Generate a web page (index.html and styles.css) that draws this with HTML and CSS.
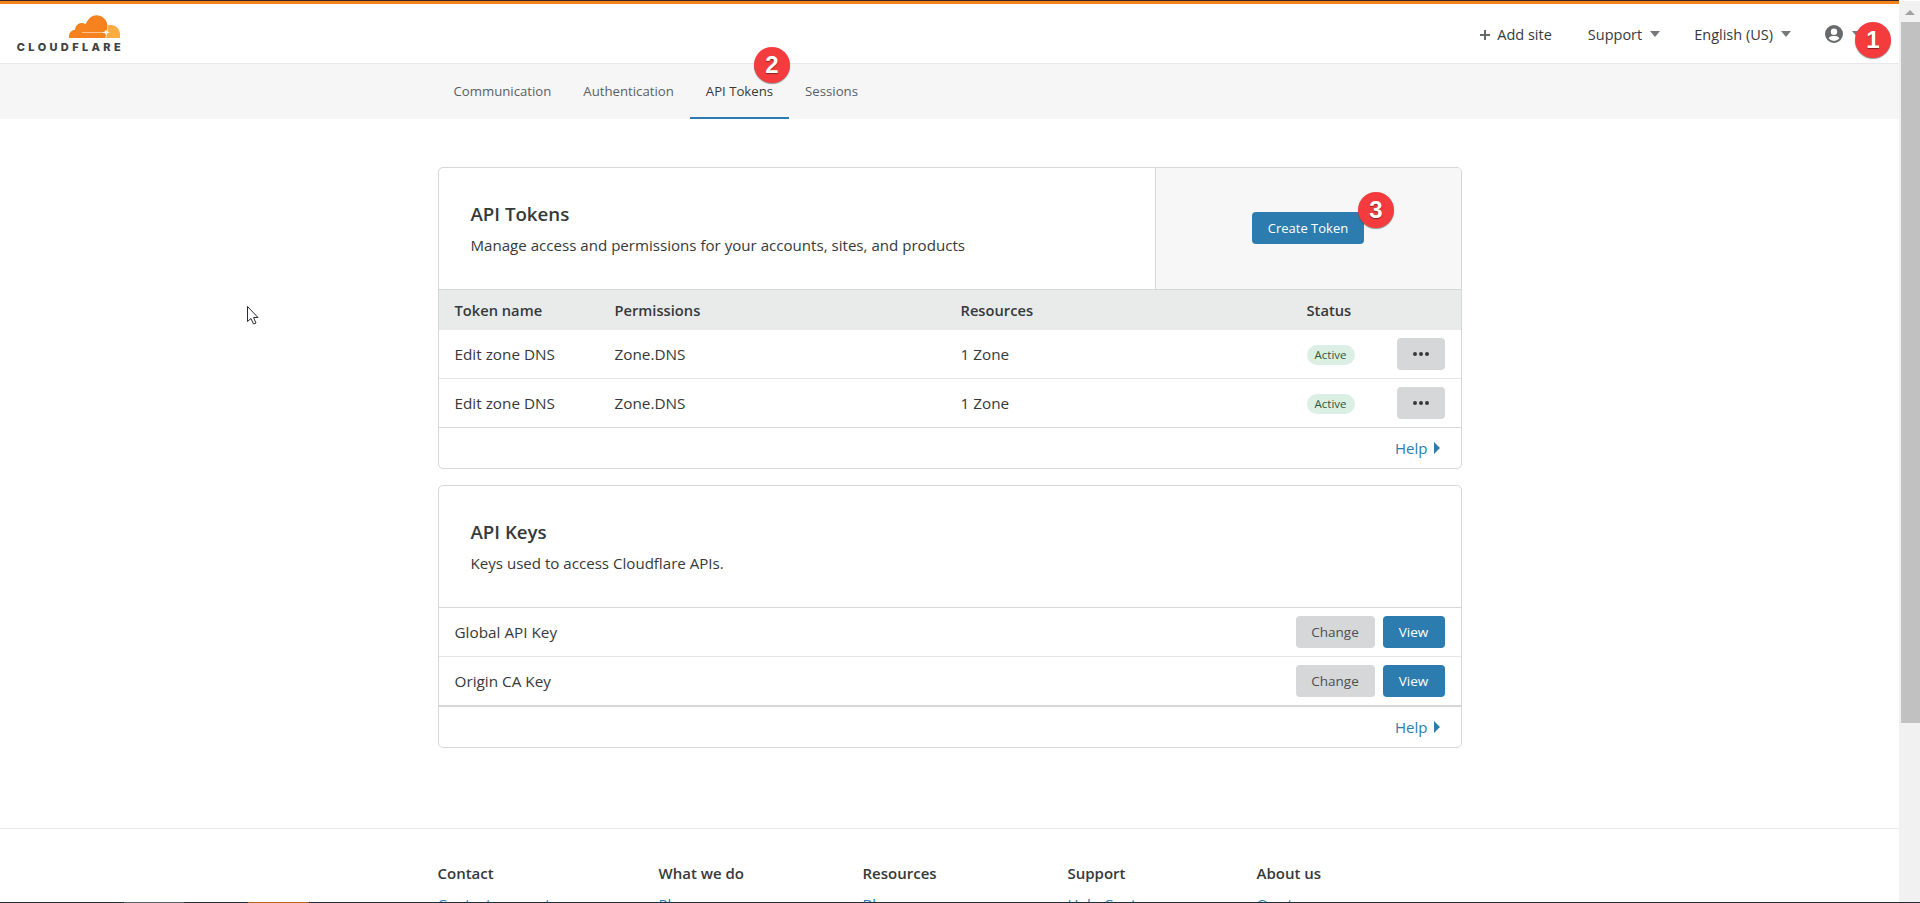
FILE: index.html
```html
<!DOCTYPE html>
<html lang="en">
<head>
<meta charset="utf-8">
<title>API Tokens | Cloudflare</title>
<link rel="stylesheet" href="styles.css">
</head>
<body>
<div class="viewport">
  <div class="page">
    <div class="topline"></div>
    <header class="header">
      <a class="logo">
        <svg class="cloud" width="52" height="24" viewBox="0 0 52 24">
          <path fill="#f6821f" d="M0 23v-2.500C0.500 17 3 15 6 15c0.300-4 3-7 6.500-7 1.500 0 2.800 0.500 4 1.300C19.500 3.500 23 0.300 27.500 0.300c5.500 0 9.800 4 10.800 9.200 0.300 1.500 0.200 3 0 4.500-0.500 3-1 6-2 9z"/>
          <path fill="#fbad41" d="M37 23c0.800-2.500 1.400-5.500 1.700-8.500 0.300-1.500 0.300-3 0.100-4.300 1-0.300 2-0.300 3-0.300 5 0 9.200 4 9.200 9v4.100z"/>
          <path fill="#fff" d="M13 17.200h20.500l2.500-0.600 1 -2.200 1 2.200 3 0.900-3 0.800-1 2.300-1-2.300-2.500-0.600h-20.500z"/>
        </svg>
        <span class="wordmark">CLOUDFLARE</span>
      </a>
      <nav class="header-actions">
        <span class="action add"><svg class="plus" width="12" height="12" viewBox="0 0 12 12"><path d="M5 1h2v4h4v2H7v4H5V7H1V5h4z"/></svg>Add site</span>
        <span class="action support">Support<i class="caret"></i></span>
        <span class="action lang">English (US)<i class="caret"></i></span>
        <span class="action user">
          <svg width="18" height="18" viewBox="0 0 18 18"><path fill="#666a6d" fill-rule="evenodd" d="M9 0a9 9 0 1 0 0 18A9 9 0 0 0 9 0zm0 3.500a3.200 3.200 0 1 1 0 6.400 3.200 3.200 0 0 1 0-6.400zM9 16a7 7 0 0 1-5.300-2.500c.5-1.600 2-2.500 3.300-2.500h4c1.300 0 2.800.9 3.300 2.500A7 7 0 0 1 9 16z"/></svg>
          <i class="caret"></i>
        </span>
      </nav>
    </header>
    <div class="subnav">
      <div class="container tabs">
        <a class="tab">Communication</a>
        <a class="tab">Authentication</a>
        <a class="tab active">API Tokens</a>
        <a class="tab">Sessions</a>
      </div>
    </div>
    <main class="container main">
      <section class="card">
        <div class="card-head">
          <div class="card-intro">
            <h2>API Tokens</h2>
            <p>Manage access and permissions for your accounts, sites, and products</p>
          </div>
          <div class="card-side"><button class="btn primary create">Create Token</button></div>
        </div>
        <div class="row thead"><span>Token name</span><span>Permissions</span><span>Resources</span><span>Status</span></div>
        <div class="row">
          <span>Edit zone DNS</span><span>Zone.DNS</span><span>1 Zone</span><span><b class="pill">Active</b></span>
          <button class="btn neutral more"><i></i><i></i><i></i></button>
        </div>
        <div class="row last">
          <span>Edit zone DNS</span><span>Zone.DNS</span><span>1 Zone</span><span><b class="pill">Active</b></span>
          <button class="btn neutral more"><i></i><i></i><i></i></button>
        </div>
        <div class="card-foot"><a class="help">Help<i class="arrow"></i></a></div>
      </section>
      <section class="card">
        <div class="card-intro keys">
          <h2>API Keys</h2>
          <p>Keys used to access Cloudflare APIs.</p>
        </div>
        <div class="keyrow"><span>Global API Key</span><div class="btns"><button class="btn neutral change">Change</button><button class="btn primary view">View</button></div></div>
        <div class="keyrow last"><span>Origin CA Key</span><div class="btns"><button class="btn neutral change">Change</button><button class="btn primary view">View</button></div></div>
        <div class="card-foot"><a class="help">Help<i class="arrow"></i></a></div>
      </section>
    </main>
    <footer class="footer">
      <div class="container footer-cols">
        <div class="fcol c1"><h3>Contact</h3><a>Contact support</a></div>
        <div class="fcol c2"><h3>What we do</h3><a>Plans</a></div>
        <div class="fcol c3"><h3>Resources</h3><a>Blog</a></div>
        <div class="fcol c4"><h3>Support</h3><a>Help Center</a></div>
        <div class="fcol c5"><h3>About us</h3><a>Our team</a></div>
      </div>
    </footer>
  </div>
  <div class="scrollbar"><i class="up"></i><i class="thumb"></i></div>
  <span class="step s1">1</span>
  <span class="step s2">2</span>
  <span class="step s3">3</span>
  <svg class="pointer" width="14" height="20" viewBox="0 0 14 20"><path fill="#fff" stroke="#2b2b33" stroke-width="1" d="M1.500.5v15l3.500-3 2.500 5.500 2.500-1-2.500-5.500h4.500z"/></svg>
  <div class="taskbar"><i class="t1"></i><i class="t2"></i></div>
</div>
</body>
</html>
```
FILE: styles.css
```css
* { box-sizing: border-box; }
html, body { margin: 0; height: 100%; overflow: hidden; }
body { font-family: "Open Sans", "Liberation Sans", sans-serif; font-size: 15px; color: #36393a; background: #fff; }
.viewport { position: relative; width: 1920px; height: 903px; overflow: hidden; }
.page { width: 1899px; height: 903px; overflow: hidden; }
.container { width: 1024px; margin: 0 auto; }
.topline { height: 4px; background: #f6821f; border-top: 1px solid #3b2a1c; }

.header { height: 60px; display: flex; justify-content: space-between; border-bottom: 1px solid #e8e8e8; padding: 0 0 0 16px; }
.logo { display: flex; flex-direction: column; align-items: flex-end; width: 105px; padding-top: 11px; }
.cloud { display: block; }
.wordmark { font-family: "Inter", "Open Sans", sans-serif; font-weight: 800; font-size: 11px; line-height: 11px; letter-spacing: 3.350px; color: #404242; margin-top: 3px; margin-right: -3px; white-space: nowrap; }
.header-actions { display: flex; align-items: center; font-size: 14.500px; color: #36393a; padding-top: 2px; }
.action { display: flex; align-items: center; }
.add { margin-right: 36px; }
.plus { margin-right: 6px; fill: #666a6d; }
.support { margin-right: 34px; }
.lang { margin-right: 34px; }
.user { margin-right: 37px; }
.user svg { margin-top: -2px; }
.caret { display: inline-block; width: 0; height: 0; margin-left: 8px; border: 5.500px solid transparent; border-top: 6px solid #75797c; border-bottom: 0; margin-top: -2px; }
.user .caret { margin-left: 9px; }

.subnav { height: 55px; background: #f6f6f6; }
.tabs { display: flex; height: 100%; }
.tab { padding: 0 16px; height: 55px; line-height: 54px; font-size: 13.200px; color: #5b6066; border-bottom: 2px solid transparent; }
.tab.active { color: #36393a; border-bottom-color: #2c7cb0; }

.main { padding-top: 48px; display: flex; flex-direction: column; gap: 16px; }
.card { border: 1px solid #d5d7d8; border-radius: 5px; overflow: hidden; background: #fff; }
.card-head { display: flex; height: 122px; border-bottom: 1px solid #d5d7d8; }
.card-intro { flex: 1; padding: 32px 32px 0; }
.card-intro h2 { margin: 0; font-size: 18.700px; line-height: 28px; font-weight: 600; color: #36393a; }
.card-intro p { margin: 5px 0 0; font-size: 15.100px; line-height: 24px; color: #36393a; }
.card-intro.keys { height: 122px; flex: none; padding-top: 32px; border-bottom: 1px solid #d5d7d8; }
.card-side { width: 306px; background: #f7f7f7; border-left: 1px solid #d5d7d8; display: flex; justify-content: center; align-items: center; padding-bottom: 1px; }

.row { display: grid; grid-template-columns: 160px 346px 346px 90px 48px; align-items: center; height: 49px; padding-left: 16px; border-bottom: 1px solid #e5e6e6; font-size: 15.300px; }
.row.thead { height: 40px; background: #e9ebeb; border-bottom: 0; font-size: 14.700px; font-weight: 600; }
.row.last { height: 49px; border-bottom: 1px solid #d5d7d8; }
.pill { display: inline-block; height: 20px; width: 48px; line-height: 20px; text-align: center; border-radius: 10px; background: #dcefe4; font-size: 11.500px; font-weight: 400; color: #36533f; }

.btn { height: 32px; border: 0; border-radius: 4px; font-family: inherit; font-size: 13px; padding: 0; cursor: pointer; }
.primary { background: #2c7cb0; color: #fff; }
.neutral { background: #d5d7d8; color: #4b4f52; }
.create { width: 112px; margin-top: 0; }
.more { width: 48px; display: flex; align-items: center; justify-content: center; gap: 2px; padding-bottom: 1px; }
.more i { width: 4px; height: 4px; border-radius: 50%; background: #36393a; }
.card-foot { height: 40px; display: flex; align-items: center; justify-content: flex-end; padding-right: 21px; }
.help { color: #2c7cb0; font-size: 15px; display: flex; align-items: center; }
.arrow { width: 0; height: 0; border: 6px solid transparent; border-left: 6px solid #2c7cb0; border-right: 0; margin-left: 6px; }

.keyrow { display: flex; align-items: center; justify-content: space-between; height: 49px; padding: 0 16px 0 16px; border-bottom: 1px solid #e5e6e6; font-size: 15.300px; }
.keyrow.last { height: 50px; border-bottom: 2px solid #d5d7d8; }
.btns { display: flex; gap: 8px; }
.change { width: 79px; font-size: 13.500px; }
.view { width: 62px; font-size: 13.500px; }

.footer { margin-top: 80px; border-top: 1px solid #e8e8e8; }
.footer-cols { display: flex; padding-top: 33px; }
.fcol h3 { margin: 0; font-size: 15px; line-height: 22px; font-weight: 600; color: #36393a; }
.fcol a { display: block; margin-top: 10px; font-size: 15px; line-height: 20px; color: #2c7cb0; }
.c1 { width: 221px; }
.c2 { width: 204px; }
.c3 { width: 205px; }
.c4 { width: 189px; }

.scrollbar { position: absolute; top: 1px; right: 0; width: 21px; height: 901px; background: #f1f1f1; }
.up { position: absolute; left: 6px; top: 9px; width: 0; height: 0; border: 5px solid transparent; border-bottom: 5px solid #a3a3a3; border-top: 0; }
.thumb { position: absolute; left: 2px; right: 0; top: 21px; height: 701px; background: #c1c1c1; }

.step { position: absolute; width: 36px; height: 36px; border-radius: 50%; background: #f43c3e; color: #fff; font-family: "Liberation Sans", Arial, sans-serif; font-weight: 700; font-size: 24px; line-height: 36px; text-align: center; box-shadow: 0 1px 1px rgba(60, 60, 60, .55); text-shadow: 0 1px 1px rgba(0, 0, 0, .45); }
.s1 { left: 1855px; top: 22px; }
.s2 { left: 754px; top: 47px; }
.s3 { left: 1358px; top: 192px; }
.pointer { position: absolute; left: 246px; top: 306px; }

.taskbar { position: absolute; left: 0; right: 0; bottom: 0; height: 1px; background: #1d2f3a; }
.taskbar i { position: absolute; top: 0; height: 1px; }
.t1 { left: 124px; width: 60px; background: #56636c; }
.t2 { left: 248px; width: 61px; background: #b7661f; }
```
